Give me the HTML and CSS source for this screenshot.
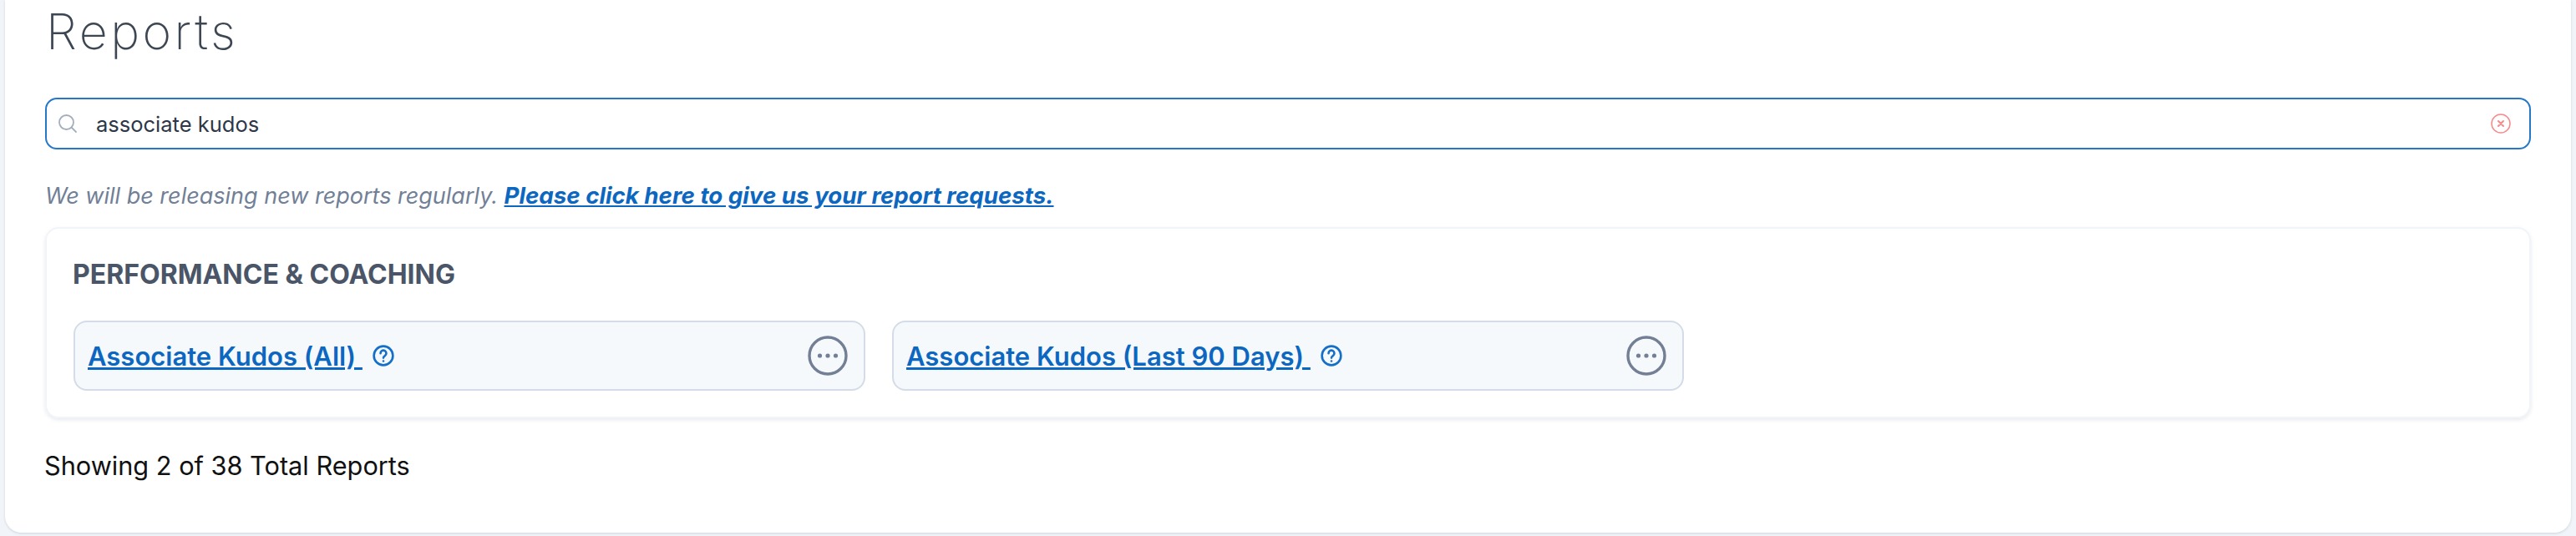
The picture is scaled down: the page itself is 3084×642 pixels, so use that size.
FILE: index.html
```html
<!DOCTYPE html>
<html lang="en">
<head>
    <meta charset="UTF-8">
    <meta name="viewport" content="width=device-width, initial-scale=1.0">
    <title>Reports</title>
    <link rel="stylesheet" href="styles.css">
</head>
<body>
    <div class="panel">
        <h1 class="page-title">Reports</h1>

        <div class="search-box">
            <svg class="search-icon" viewBox="0 0 24 24" fill="none" stroke="currentColor" stroke-width="1.8" stroke-linecap="round">
                <circle cx="10.5" cy="10.5" r="8.5"/>
                <path d="M17 17l5 5"/>
            </svg>
            <span class="search-text">associate kudos</span>
            <svg class="clear-icon" viewBox="0 0 24 24" fill="none" stroke="currentColor" stroke-width="1.5" stroke-linecap="round">
                <circle cx="12" cy="12" r="11"/>
                <path d="M9 9l6 6M15 9l-6 6" stroke-width="2"/>
            </svg>
        </div>

        <p class="release-note">We will be releasing new reports regularly. <a href="#">Please click here to give us your report requests.</a></p>

        <div class="category-card">
            <h2 class="category-title">PERFORMANCE &amp; COACHING</h2>
            <div class="report-list">
                <div class="report-tile">
                    <a class="report-link" href="#">Associate Kudos (All) </a>
                    <svg class="help-icon" viewBox="0 0 24 24" fill="none" stroke="currentColor" stroke-width="2.4" stroke-linecap="round">
                        <circle cx="12" cy="12" r="10.5"/>
                        <path d="M8.8 9.4a3.2 3.2 0 1 1 4.9 2.7c-1 .6-1.7 1.2-1.7 2.3"/>
                        <path d="M12 18h.01"/>
                    </svg>
                    <svg class="more-icon" viewBox="0 0 48 48" fill="none" stroke="currentColor" stroke-width="3.4">
                        <circle cx="24" cy="24" r="22"/>
                        <circle cx="14.5" cy="24" r="2.6" fill="currentColor" stroke="none"/>
                        <circle cx="24" cy="24" r="2.6" fill="currentColor" stroke="none"/>
                        <circle cx="33.5" cy="24" r="2.6" fill="currentColor" stroke="none"/>
                    </svg>
                </div>
                <div class="report-tile">
                    <a class="report-link" href="#">Associate Kudos (Last 90 Days) </a>
                    <svg class="help-icon" viewBox="0 0 24 24" fill="none" stroke="currentColor" stroke-width="2.4" stroke-linecap="round">
                        <circle cx="12" cy="12" r="10.5"/>
                        <path d="M8.8 9.4a3.2 3.2 0 1 1 4.9 2.7c-1 .6-1.7 1.2-1.7 2.3"/>
                        <path d="M12 18h.01"/>
                    </svg>
                    <svg class="more-icon" viewBox="0 0 48 48" fill="none" stroke="currentColor" stroke-width="3.4">
                        <circle cx="24" cy="24" r="22"/>
                        <circle cx="14.5" cy="24" r="2.6" fill="currentColor" stroke="none"/>
                        <circle cx="24" cy="24" r="2.6" fill="currentColor" stroke="none"/>
                        <circle cx="33.5" cy="24" r="2.6" fill="currentColor" stroke="none"/>
                    </svg>
                </div>
            </div>
        </div>

        <div class="report-count">Showing 2 of 38 Total Reports</div>
    </div>
</body>
</html>
```

FILE: styles.css
```css
body {
    font-family: Inter, "Liberation Sans", sans-serif;
    margin: 0;
    padding: 0;
    height: 642px;
    overflow: hidden;
    background-color: #f1f5f9;
}

.panel {
    height: 638px;
    box-sizing: border-box;
    margin: 0 6px;
    padding: 0 48px;
    background-color: #fff;
    border-radius: 0 0 20px 20px;
    box-shadow: 0 1px 3px rgba(100, 116, 139, 0.25);
}

.page-title {
    margin: 0;
    height: 117px;
    box-sizing: border-box;
    padding: 3px 0 0 1px;
    font-size: 59px;
    line-height: 70px;
    font-weight: 200;
    letter-spacing: 3.5px;
    color: #3d4653;
}

.search-box {
    display: flex;
    align-items: center;
    height: 62px;
    box-sizing: border-box;
    padding: 0 22px 0 13px;
    border: 2px solid #2578c9;
    border-radius: 14px;
}

.search-icon {
    width: 24px;
    height: 24px;
    color: #a3afbf;
    margin-right: 22px;
}

.search-text {
    flex: 1;
    font-size: 25.5px;
    color: #2d3748;
}

.clear-icon {
    width: 24px;
    height: 24px;
    color: #f58b8b;
}

.release-note {
    margin: 0;
    height: 93px;
    box-sizing: border-box;
    padding-top: 37px;
    font-size: 27px;
    line-height: 36px;
    font-style: italic;
    color: #718096;
}

.release-note a {
    font-size: 27.7px;
    font-weight: 700;
    color: #0b67c0;
}

.category-card {
    height: 229px;
    box-sizing: border-box;
    padding: 0 32px;
    border: 2px solid #f1f4f8;
    border-radius: 16px;
    box-shadow: 0 2px 4px rgba(100, 116, 139, 0.16);
}

.category-title {
    margin: 0 0 0 -1px;
    height: 110px;
    box-sizing: border-box;
    padding-top: 36px;
    font-size: 32px;
    line-height: 38px;
    font-weight: 650;
    color: #4a5568;
}

.report-list {
    display: grid;
    grid-template-columns: repeat(3, 948px);
    gap: 32px;
}

.report-tile {
    display: flex;
    align-items: center;
    height: 84px;
    box-sizing: border-box;
    padding: 0 19px 0 15px;
    background-color: #f6f9fc;
    border: 2px solid #d3dce7;
    border-radius: 16px;
}

.report-link {
    font-size: 31px;
    font-weight: 600;
    white-space: pre;
    color: #0b67c0;
}

.help-icon {
    width: 26px;
    height: 26px;
    margin-left: 12px;
    color: #1470c6;
}

.more-icon {
    width: 48px;
    height: 48px;
    margin-left: auto;
    color: #737f95;
}

.report-count {
    margin-left: -1px;
    padding-top: 39px;
    font-size: 30.7px;
    line-height: 36px;
    color: #111;
}
```
